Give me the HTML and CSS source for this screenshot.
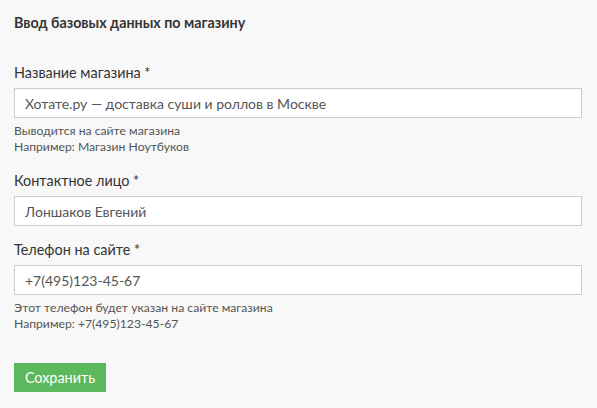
FILE: index.html
```html
<!DOCTYPE html>
<html lang="ru">
<head>
<meta charset="utf-8">
<link rel="stylesheet" href="styles.css">
</head>
<body>
<div class="page">
  <h1 class="title">Ввод базовых данных по магазину</h1>
  <form class="form">
    <div class="field field-help">
      <label class="label">Название магазина *</label>
      <input class="input" type="text" value="Хотате.ру — доставка суши и роллов в Москве">
      <div class="help">Выводится на сайте магазина<br>Например: Магазин Ноутбуков</div>
    </div>
    <div class="field">
      <label class="label">Контактное лицо *</label>
      <input class="input" type="text" value="Лоншаков Евгений">
    </div>
    <div class="field field-help">
      <label class="label">Телефон на сайте *</label>
      <input class="input" type="text" value="+7(495)123-45-67">
      <div class="help">Этот телефон будет указан на сайте магазина<br>Например: +7(495)123-45-67</div>
    </div>
    <div class="actions">
      <button class="btn" type="button">Сохранить</button>
    </div>
  </form>
</div>
</body>
</html>
```
FILE: styles.css
```css
html, body {
  margin: 0;
  padding: 0;
  background: #f8f8f8;
}
body {
  font-family: Lato, "Open Sans", sans-serif;
  color: #333;
}
.page {
  padding: 14px 15px 0 14px;
  width: 568px;
}
.title {
  margin: 0;
  font-size: 14.3px;
  font-weight: 700;
  line-height: 18px;
  color: #333;
}
.form {
  margin-top: 31px;
  display: flex;
  flex-direction: column;
}
.field {
  display: flex;
  flex-direction: column;
  margin-bottom: 14px;
}
.field-help {
  margin-bottom: 16px;
}
.label {
  font-size: 14.4px;
  line-height: 20px;
  margin-bottom: 5px;
  color: #333;
}
.input {
  box-sizing: border-box;
  height: 30px;
  width: 100%;
  border: 1px solid #cccccc;
  background: #fff;
  padding: 0 10px;
  font-family: Lato, "Open Sans", sans-serif;
  font-size: 14px;
  color: #555;
  outline: none;
  margin: 0;
}
.help {
  font-size: 12.2px;
  line-height: 16px;
  color: #555;
  margin-top: 5px;
}
.actions {
  margin-top: 15px;
}
.btn {
  box-sizing: border-box;
  width: 92px;
  height: 29px;
  background: #5cb85c;
  border: 1px solid #5cb85c;
  color: #fff;
  font-family: Lato, "Open Sans", sans-serif;
  font-size: 14.4px;
  padding: 0;
  cursor: pointer;
}
```
